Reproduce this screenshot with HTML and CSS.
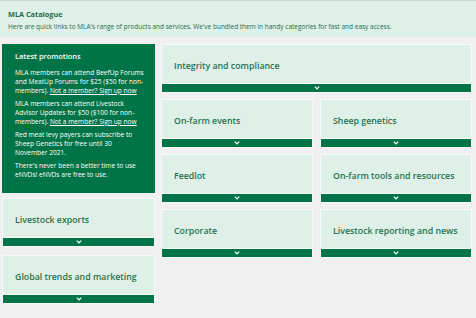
FILE: index.html
```html
<!DOCTYPE html>
<html>
<head>
<meta charset="utf-8">
<link rel="stylesheet" href="styles.css">
</head>
<body>
<header class="intro">
  <h1 class="intro-title">MLA Catalogue</h1>
  <p class="intro-text">Here are quick links to MLA's range of products and services. We've bundled them in handy categories for fast and easy access.</p>
</header>
<main class="layout">
  <div class="side">
    <section class="promo">
      <h2 class="promo-title">Latest promotions</h2>
      <p>MLA members can attend BeefUp Forums and MeatUp Forums for $25 ($50 for non-members). <a href="#">Not a member? Sign up now</a></p>
      <p>MLA members can attend Livestock Advisor Updates for $50 ($100 for non-members). <a href="#">Not a member? Sign up now</a></p>
      <p>Red meat levy payers can subscribe to Sheep Genetics for free until 30 November 2021.</p>
      <p>There's never been a better time to use eNVDs! eNVDs are free to use.</p>
    </section>
    <div class="side-cards">
      <div class="card"><div class="card-body">Livestock exports</div><div class="card-bar"><svg width="6" height="4" viewBox="0 0 6 4"><path d="M0.8 0.6 L3 2.9 L5.2 0.6" fill="none" stroke="#fff" stroke-width="1.3"/></svg></div></div>
      <div class="card"><div class="card-body">Global trends and marketing</div><div class="card-bar"><svg width="6" height="4" viewBox="0 0 6 4"><path d="M0.8 0.6 L3 2.9 L5.2 0.6" fill="none" stroke="#fff" stroke-width="1.3"/></svg></div></div>
    </div>
  </div>
  <div class="grid">
    <div class="card wide"><div class="card-body">Integrity and compliance</div><div class="card-bar"><svg width="6" height="4" viewBox="0 0 6 4"><path d="M0.8 0.6 L3 2.9 L5.2 0.6" fill="none" stroke="#fff" stroke-width="1.3"/></svg></div></div>
    <div class="card"><div class="card-body">On-farm events</div><div class="card-bar"><svg width="6" height="4" viewBox="0 0 6 4"><path d="M0.8 0.6 L3 2.9 L5.2 0.6" fill="none" stroke="#fff" stroke-width="1.3"/></svg></div></div>
    <div class="card"><div class="card-body">Sheep genetics</div><div class="card-bar"><svg width="6" height="4" viewBox="0 0 6 4"><path d="M0.8 0.6 L3 2.9 L5.2 0.6" fill="none" stroke="#fff" stroke-width="1.3"/></svg></div></div>
    <div class="card"><div class="card-body">Feedlot</div><div class="card-bar"><svg width="6" height="4" viewBox="0 0 6 4"><path d="M0.8 0.6 L3 2.9 L5.2 0.6" fill="none" stroke="#fff" stroke-width="1.3"/></svg></div></div>
    <div class="card"><div class="card-body">On-farm tools and resources</div><div class="card-bar"><svg width="6" height="4" viewBox="0 0 6 4"><path d="M0.8 0.6 L3 2.9 L5.2 0.6" fill="none" stroke="#fff" stroke-width="1.3"/></svg></div></div>
    <div class="card"><div class="card-body">Corporate</div><div class="card-bar"><svg width="6" height="4" viewBox="0 0 6 4"><path d="M0.8 0.6 L3 2.9 L5.2 0.6" fill="none" stroke="#fff" stroke-width="1.3"/></svg></div></div>
    <div class="card"><div class="card-body">Livestock reporting and news</div><div class="card-bar"><svg width="6" height="4" viewBox="0 0 6 4"><path d="M0.8 0.6 L3 2.9 L5.2 0.6" fill="none" stroke="#fff" stroke-width="1.3"/></svg></div></div>
  </div>
</main>
</body>
</html>
```
FILE: styles.css
```css
* { box-sizing: border-box; }
html, body { margin: 0; padding: 0; }
body {
  background: #f0f0f0;
  font-family: "Open Sans", "DejaVu Sans", sans-serif;
  width: 476px;
  height: 318px;
  overflow: hidden;
}
.intro {
  background: #dff0e9;
  border-top: 1px solid #cddcd3;
  height: 37px;
  padding: 8px 8px 0 8px;
  color: #1f6c4a;
}
.intro-title {
  margin: 0;
  font-size: 7.3px;
  font-weight: 700;
  line-height: 10px;
}
.intro-text {
  margin: 3px 0 0 0;
  font-size: 6.5px;
  line-height: 10px;
  white-space: nowrap;
}
.layout {
  display: grid;
  grid-template-columns: 153px 311px;
  align-items: start;
  gap: 6px;
  padding: 7px 4px 0 2px;
}
.side { display: flex; flex-direction: column; }
.promo {
  background: #007447;
  color: #fff;
  height: 149px;
  padding: 6px 10px 0 13px;
  font-size: 6.6px;
  line-height: 9px;
}
.promo-title {
  margin: 0 0 6px 0;
  font-size: 7.4px;
  font-weight: 600;
  line-height: 12px;
}
.promo p { margin: 0 0 4px 0; }
.promo a { color: #fff; text-decoration: underline; }
.side-cards {
  margin-top: 5px;
  display: flex;
  flex-direction: column;
  gap: 8px;
}
.grid {
  display: grid;
  grid-template-columns: 1fr 1fr;
  grid-auto-rows: 49px;
  align-content: start;
  gap: 6px 7px;
}
.wide { grid-column: span 2; }
.card {
  height: 49px;
  display: flex;
  flex-direction: column;
  background: #dff0e9;
  border: 1px solid #f6faf8;
}
.card-body {
  flex: 1;
  display: flex;
  align-items: center;
  padding: 3px 0 0 12px;
  color: #1f7350;
  font-size: 8.8px;
  font-weight: 600;
}
.card-bar {
  height: 9px;
  background: #007447;
  border-top: 1px solid #f6faf8;
  display: flex;
  align-items: center;
  justify-content: center;
}
.card-bar svg { display: block; }
```
